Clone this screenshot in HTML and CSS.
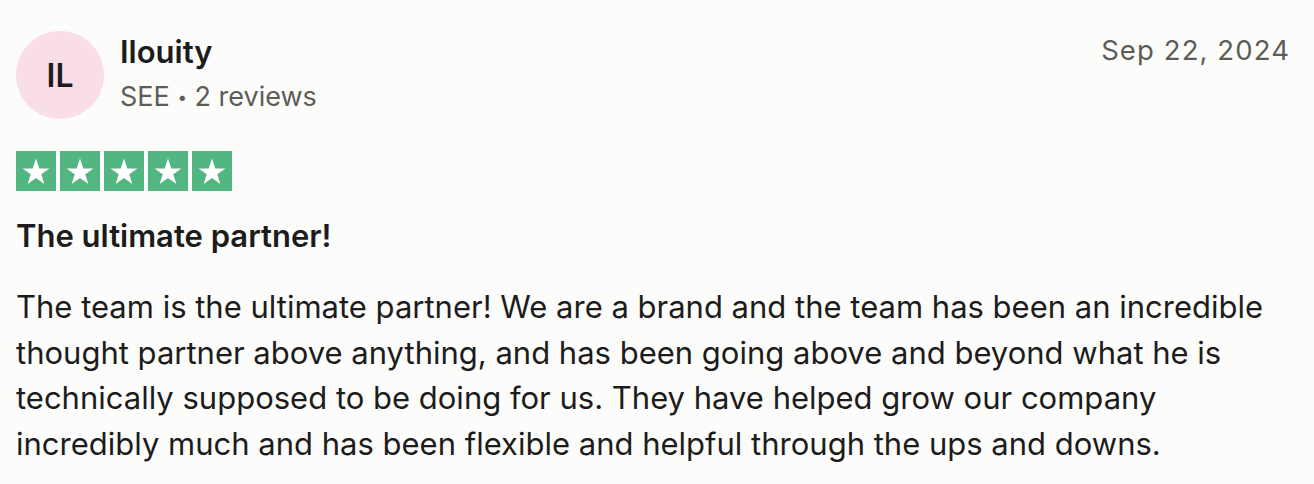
FILE: index.html
```html
<!DOCTYPE html>
<html lang="en">
<head>
<meta charset="utf-8">
<link rel="stylesheet" href="styles.css">
</head>
<body>
<article class="review">
  <header class="review-head">
    <div class="consumer">
      <div class="avatar">IL</div>
      <div class="consumer-info">
        <div class="name">Ilouity</div>
        <div class="meta">SEE <span class="dot">•</span> 2 reviews</div>
      </div>
    </div>
    <time class="date">Sep 22, 2024</time>
  </header>
  <div class="stars">
    <span class="star"><svg viewBox="0 0 24 24"><path d="M12 3.2l2.35 6.95h7.15l-5.8 4.2 2.2 6.85L12 17.0l-5.9 4.2 2.2-6.85-5.8-4.2h7.15z" fill="#fff"/></svg></span>
    <span class="star"><svg viewBox="0 0 24 24"><path d="M12 3.2l2.35 6.95h7.15l-5.8 4.2 2.2 6.85L12 17.0l-5.9 4.2 2.2-6.85-5.8-4.2h7.15z" fill="#fff"/></svg></span>
    <span class="star"><svg viewBox="0 0 24 24"><path d="M12 3.2l2.35 6.95h7.15l-5.8 4.2 2.2 6.85L12 17.0l-5.9 4.2 2.2-6.85-5.8-4.2h7.15z" fill="#fff"/></svg></span>
    <span class="star"><svg viewBox="0 0 24 24"><path d="M12 3.2l2.35 6.95h7.15l-5.8 4.2 2.2 6.85L12 17.0l-5.9 4.2 2.2-6.85-5.8-4.2h7.15z" fill="#fff"/></svg></span>
    <span class="star"><svg viewBox="0 0 24 24"><path d="M12 3.2l2.35 6.95h7.15l-5.8 4.2 2.2 6.85L12 17.0l-5.9 4.2 2.2-6.85-5.8-4.2h7.15z" fill="#fff"/></svg></span>
  </div>
  <h2 class="title">The ultimate partner!</h2>
  <p class="body">The team is the ultimate partner! We are a brand and the team has been an incredible thought partner above anything, and has been going above and beyond what he is technically supposed to be doing for us. They have helped grow our company incredibly much and has been flexible and helpful through the ups and downs.</p>
</article>
</body>
</html>
```
FILE: styles.css
```css
html, body {
  margin: 0;
  padding: 0;
  background: #fcfcfb;
}
body {
  font-family: Inter, "Noto Sans", sans-serif;
  color: #1c1c1c;
}
.review {
  padding: 31px 24px 0 16px;
}
.review-head {
  display: flex;
  justify-content: space-between;
  align-items: flex-start;
}
.consumer {
  display: flex;
  align-items: flex-start;
  gap: 16px;
}
.avatar {
  width: 88px;
  height: 88px;
  border-radius: 50%;
  background: #f9dde8;
  display: flex;
  align-items: center;
  justify-content: center;
  font-size: 32px;
  font-weight: 600;
  color: #1c1c1c;
}
.consumer-info {
  padding-top: 1px;
}
.name {
  font-size: 31px;
  font-weight: 600;
  line-height: 40px;
}
.meta {
  font-size: 27px;
  line-height: 38px;
  color: #5d5d58;
  margin-top: 6px;
}
.dot {
  font-size: 17px;
  vertical-align: 3px;
}
.date {
  font-size: 27.5px;
  letter-spacing: 1.1px;
  color: #5d5d58;
  line-height: 38px;
  margin-top: 0px;
}
.stars {
  display: flex;
  gap: 4px;
  margin-top: 32px;
}
.star {
  width: 40px;
  height: 40px;
  background: #51b680;
  display: flex;
  align-items: center;
  justify-content: center;
}
.star svg {
  width: 34px;
  height: 34px;
}
.title {
  margin: 21px 0 0;
  font-size: 31px;
  font-weight: 600;
  line-height: 48px;
}
.body {
  margin: 24px 0 0;
  font-size: 31px;
  line-height: 45.5px;
  max-width: 1280px;
}
```
